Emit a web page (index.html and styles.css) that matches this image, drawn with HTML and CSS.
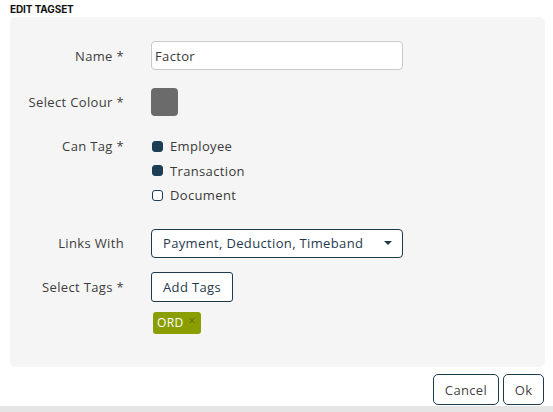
FILE: index.html
```html
<!DOCTYPE html>
<html>
<head>
<meta charset="utf-8">
<link rel="stylesheet" href="styles.css">
</head>
<body>
<div class="title">EDIT TAGSET</div>
<div class="panel">
  <div class="row r-name">
    <div class="label">Name *</div>
    <div class="input">Factor</div>
  </div>
  <div class="row r-colour">
    <div class="label">Select Colour *</div>
    <div class="swatch"></div>
  </div>
  <div class="row r-can top">
    <div class="label lh">Can Tag *</div>
    <div class="checks">
      <div class="check"><span class="box on"></span>Employee</div>
      <div class="check"><span class="box on"></span>Transaction</div>
      <div class="check"><span class="box"></span>Document</div>
    </div>
  </div>
  <div class="row r-links">
    <div class="label">Links With</div>
    <div class="select"><span>Payment, Deduction, Timeband</span><span class="caret"></span></div>
  </div>
  <div class="row r-tags">
    <div class="label">Select Tags *</div>
    <div class="btn add">Add Tags</div>
  </div>
  <div class="row r-chip">
    <div class="label"></div>
    <div class="chip">ORD <span class="x">×</span></div>
  </div>
</div>
<div class="footer">
  <div class="btn fbtn cancel">Cancel</div>
  <div class="btn fbtn ok">Ok</div>
</div>
<div class="strip"></div>
</body>
</html>
```
FILE: styles.css
```css
* { box-sizing: border-box; }
html, body { margin: 0; padding: 0; background: #fff; }
body {
  width: 553px;
  height: 412px;
  overflow: hidden;
  font-family: "Open Sans", "Noto Sans", sans-serif;
  font-size: 13px;
  letter-spacing: 0.35px;
  color: #3a3a3a;
  position: relative;
}
.title {
  font-family: "Inter", "Liberation Sans", sans-serif;
  font-weight: 700;
  font-size: 10px;
  color: #111;
  padding: 3px 0 0 10px;
  height: 17px;
  letter-spacing: -0.1px;
}
.panel {
  margin-left: 10px;
  width: 535px;
  height: 350px;
  background: #f5f5f5;
  border-radius: 6px;
  padding-top: 24px;
}
.row { display: flex; align-items: center; }
.row.top { align-items: flex-start; }
.label {
  width: 114px;
  text-align: right;
  color: #3d3d3d;
  flex-shrink: 0;
  margin-right: 27px;
  white-space: nowrap;
}
.lh { line-height: 24px; }
.input {
  width: 252px;
  height: 29px;
  background: #fff;
  border: 1px solid #c9c9c9;
  border-radius: 4px;
  padding: 0 0 0 3px;
  line-height: 27px;
  padding-top: 1px;
  color: #3a3a3a;
}
.r-colour { margin-top: 18px; }
.swatch {
  width: 27px;
  height: 28px;
  background: #6b6b6b;
  border-radius: 4px;
}
.r-can { margin-top: 18px; }
.check {
  display: flex;
  align-items: center;
  height: 24.5px;
  color: #3a3a3a;
}
.box {
  width: 11px;
  height: 11px;
  border: 1.3px solid #1d3f55;
  border-radius: 3px;
  margin: 0 7px 0 1px;
  background: #fff;
}
.box.on { background: #1d3f55; }
.r-links { margin-top: 21px; }
.select {
  width: 252px;
  height: 29px;
  border: 1px solid #1e3a4c;
  border-radius: 4px;
  background: #fff;
  display: flex;
  align-items: center;
  justify-content: space-between;
  padding: 0 10px 0 11px;
  color: #1f3a4d;
}
.caret {
  width: 0; height: 0;
  border-left: 4px solid transparent;
  border-right: 4px solid transparent;
  border-top: 4px solid #1e3a4c;
}
.r-tags { margin-top: 14px; }
.btn {
  border: 1px solid #1e3a4c;
  border-radius: 3px;
  background: #fff;
  display: flex;
  align-items: center;
  justify-content: center;
  color: #1f3a4d;
}
.add { width: 82px; height: 30px; }
.r-chip { margin-top: 10px; }
.chip {
  margin-left: 2px;
  height: 22px;
  width: 48px;
  background: #8a9e00;
  border-radius: 3px;
  color: #fff;
  font-size: 12px;
  padding-left: 4px;
  display: flex;
  align-items: center;
  font-weight: 500;
}
.chip .x {
  color: #5f6f10;
  font-weight: 400;
  margin-left: 5px;
  font-size: 12px;
  position: relative;
  top: -2px;
}
.footer {
  display: flex;
  justify-content: flex-end;
  gap: 4px;
  padding-right: 9px;
  margin-top: 7px;
}
.fbtn { height: 31px; border-radius: 5px; color: #444; }
.cancel { width: 66px; }
.ok { width: 41px; }
.strip {
  position: absolute;
  left: 0; right: 0; bottom: 0;
  height: 6px;
  background: #e5e5e5;
}
```
